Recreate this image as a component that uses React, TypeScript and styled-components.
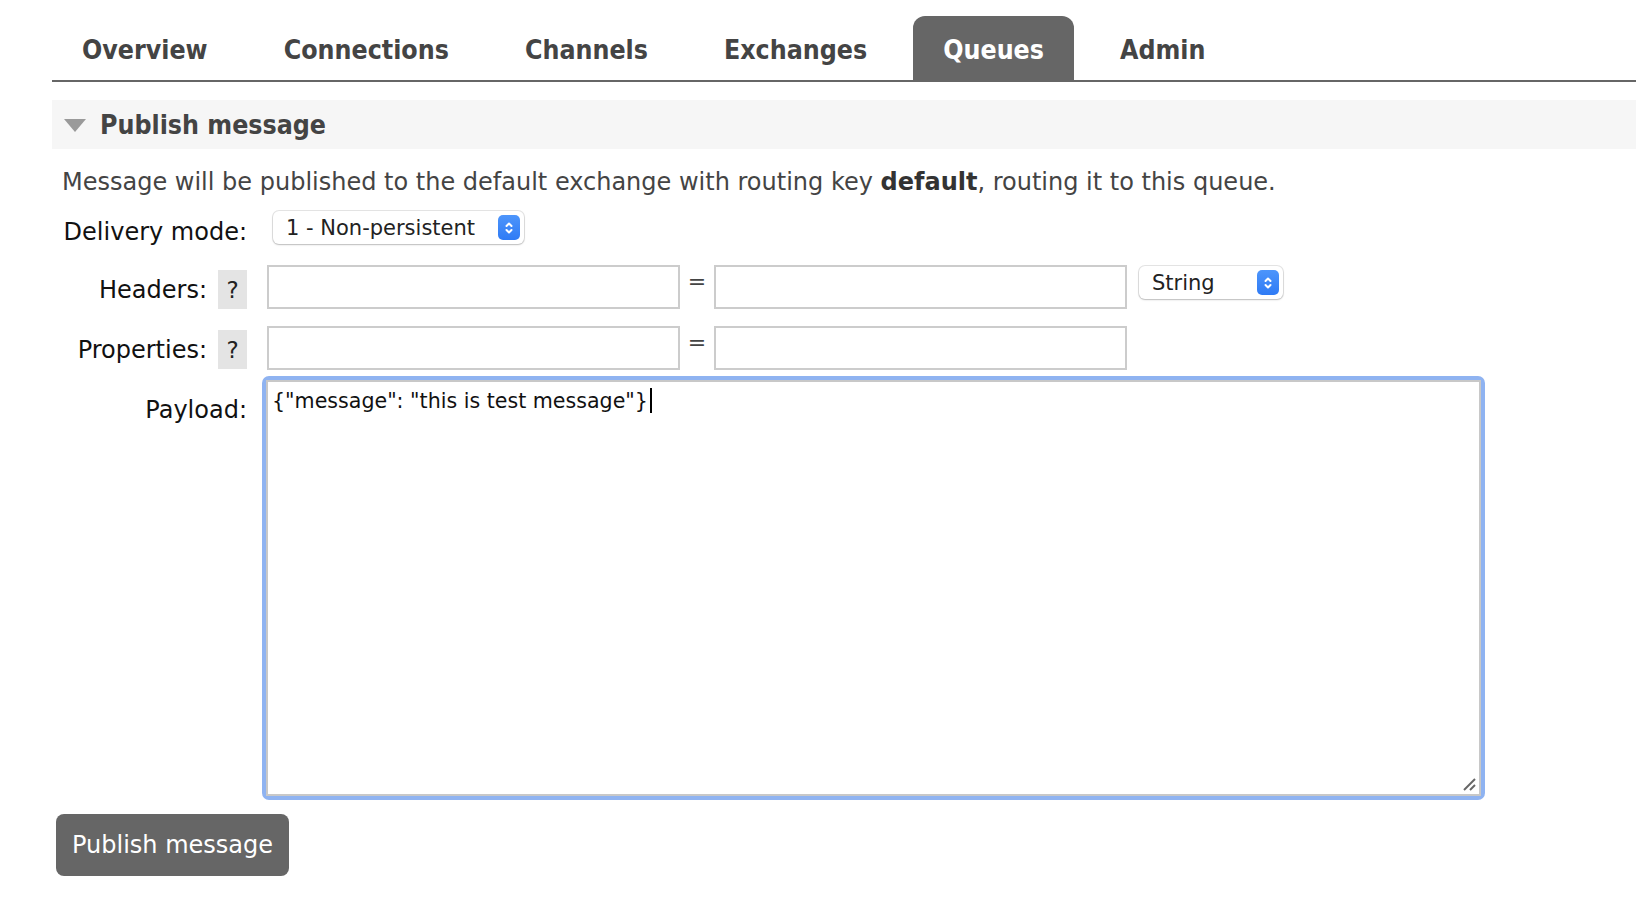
import React from "react";
import styled, { createGlobalStyle } from "styled-components";

const GlobalStyle = createGlobalStyle`
  html, body { margin: 0; padding: 0; background: #fff; }
  body { font-family: "DejaVu Sans", Verdana, sans-serif; color: #484848; }
  * { box-sizing: border-box; }
`;

const Page = styled.div`
  padding-left: 52px;
  padding-top: 16px;
`;

const TabBar = styled.ul`
  display: flex;
  gap: 16px;
  margin: 0;
  padding: 0;
  list-style: none;
  border-bottom: 2px solid #666;
  height: 66px;
`;

const Tab = styled.li<{ $active?: boolean }>`
  display: flex;
  align-items: center;
  padding: 2px 30px 0;
  height: 64px;
  font-family: "DejaVu Sans Condensed", "DejaVu Sans", sans-serif;
  font-stretch: condensed;
  font-weight: bold;
  font-size: 26.5px;
  color: ${(p) => (p.$active ? "#fff" : "#444")};
  background: ${(p) => (p.$active ? "#666" : "transparent")};
  border-radius: 12px 12px 0 0;
`;

const SectionHeader = styled.div`
  margin-top: 18px;
  height: 49px;
  background: #f6f6f6;
  display: flex;
  align-items: center;
  padding-left: 12px;
  gap: 14px;
`;

const Triangle = styled.span`
  width: 0;
  height: 0;
  border-left: 11.5px solid transparent;
  border-right: 11.5px solid transparent;
  border-top: 13px solid #9a9a9a;
  margin-top: 2px;
`;

const SectionTitle = styled.h2`
  margin: 0;
  font-family: "DejaVu Sans Condensed", "DejaVu Sans", sans-serif;
  font-stretch: condensed;
  font-weight: bold;
  font-size: 26.5px;
  color: #444;
`;

const Body = styled.div`
  padding-left: 10px;
`;

const Description = styled.p`
  margin: 18px 0 0;
  font-size: 24px;
  line-height: 30px;
  color: #444;
  b { font-weight: bold; color: #333; }
`;

const Form = styled.div`
  margin-top: 12px;
  display: grid;
  grid-template-columns: 185px 1fr;
  column-gap: 15px;
  align-items: start;
`;

const LabelCell = styled.div<{ $top: number }>`
  display: flex;
  justify-content: flex-end;
  align-items: center;
  gap: 11px;
  padding-top: ${(p) => p.$top}px;
  font-size: 24px;
  color: #111;
  white-space: nowrap;
`;

const Help = styled.span`
  display: inline-flex;
  align-items: center;
  justify-content: center;
  width: 29px;
  height: 39px;
  background: #e4e4e4;
  color: #222;
  font-size: 23px;
`;

const ValueCell = styled.div<{ $mb: number; $pl?: number }>`
  display: flex;
  align-items: flex-start;
  margin-bottom: ${(p) => p.$mb}px;
  padding-left: ${(p) => p.$pl ?? 0}px;
`;

const TextInput = styled.input`
  width: 413px;
  height: 44px;
  border: 2px solid #ccc;
  background: #fff;
  margin: 0;
  padding: 0 6px;
  font: inherit;
  font-size: 22px;
`;

const Equals = styled.span`
  width: 34px;
  text-align: center;
  font-size: 22px;
  line-height: 34px;
  color: #444;
`;

const SelectBox = styled.div<{ $w: number; $ml?: number; $mt?: number }>`
  width: ${(p) => p.$w}px;
  height: 33px;
  margin-left: ${(p) => p.$ml ?? 0}px;
  margin-top: ${(p) => p.$mt ?? 0}px;
  display: flex;
  align-items: center;
  justify-content: space-between;
  padding: 0 4px 0 13px;
  background: #fff;
  border-radius: 6px;
  box-shadow: 0 0 0 1px rgba(0, 0, 0, 0.1), 0 1px 2px rgba(0, 0, 0, 0.18);
  font-size: 21px;
  color: #222;
`;

const SelectArrow = styled.span`
  width: 22px;
  height: 25px;
  border-radius: 5px;
  background: linear-gradient(#4d95fb, #2f7bf5);
  display: inline-flex;
  align-items: center;
  justify-content: center;
`;

const Payload = styled.div`
  position: relative;
  width: 1223px;
  height: 424px;
  border-radius: 7px;
  background: #8fb3f1;
  padding: 4px;
`;

const PayloadInner = styled.div`
  width: 100%;
  height: 100%;
  border: 2px solid #c8c8c8;
  background: #fff;
  padding: 6px 4px;
  font-size: 20.6px;
  line-height: 26px;
  color: #111;
`;

const Caret = styled.span`
  display: inline-block;
  width: 2px;
  height: 25px;
  background: #000;
  vertical-align: -5px;
  margin-left: 2px;
`;

const Grip = styled.svg`
  position: absolute;
  right: 9px;
  bottom: 9px;
`;

const Button = styled.button`
  margin: 14px 0 0 -6px;
  height: 62px;
  padding: 0 16px;
  border: 0;
  border-radius: 8px;
  background: #666;
  color: #fff;
  font-family: "DejaVu Sans", Verdana, sans-serif;
  font-size: 24px;
`;

const Arrow = () => (
  <SelectArrow>
    <svg width="12" height="18" viewBox="0 0 12 18" fill="none" stroke="#fff" strokeWidth="2" strokeLinecap="round" strokeLinejoin="round">
      <path d="M3.5 7 L6 4.5 L8.5 7" />
      <path d="M3.5 11 L6 13.5 L8.5 11" />
    </svg>
  </SelectArrow>
);

const tabs = ["Overview", "Connections", "Channels", "Exchanges", "Queues", "Admin"];

export default function App() {
  return (
    <>
      <GlobalStyle />
      <Page>
        <TabBar>
          {tabs.map((t) => (
            <Tab key={t} $active={t === "Queues"}>
              {t}
            </Tab>
          ))}
        </TabBar>
        <SectionHeader>
          <Triangle />
          <SectionTitle>Publish message</SectionTitle>
        </SectionHeader>
        <Body>
          <Description>
            Message will be published to the default exchange with routing key <b>default</b>, routing it to this queue.
          </Description>
          <Form>
            <LabelCell $top={9}>Delivery mode:</LabelCell>
            <ValueCell $mb={21} $pl={11}>
              <SelectBox $w={251} $mt={2}>
                1 - Non-persistent
                <Arrow />
              </SelectBox>
            </ValueCell>

            <LabelCell $top={5}>
              Headers: <Help>?</Help>
            </LabelCell>
            <ValueCell $mb={17} $pl={5}>
              <TextInput />
              <Equals>=</Equals>
              <TextInput />
              <SelectBox $w={144} $ml={12} $mt={1}>
                String
                <Arrow />
              </SelectBox>
            </ValueCell>

            <LabelCell $top={4}>
              Properties: <Help>?</Help>
            </LabelCell>
            <ValueCell $mb={6} $pl={5}>
              <TextInput />
              <Equals>=</Equals>
              <TextInput />
            </ValueCell>

            <LabelCell $top={20}>Payload:</LabelCell>
            <ValueCell $mb={0}>
              <Payload>
                <PayloadInner>
                  {'{"message": "this is test message"}'}
                  <Caret />
                </PayloadInner>
                <Grip width="14" height="14" viewBox="0 0 14 14" stroke="#666" strokeWidth="2">
                  <path d="M2 13 L13 2" />
                  <path d="M8 13 L13 8" />
                </Grip>
              </Payload>
            </ValueCell>
          </Form>
          <Button>Publish message</Button>
        </Body>
      </Page>
    </>
  );
}
